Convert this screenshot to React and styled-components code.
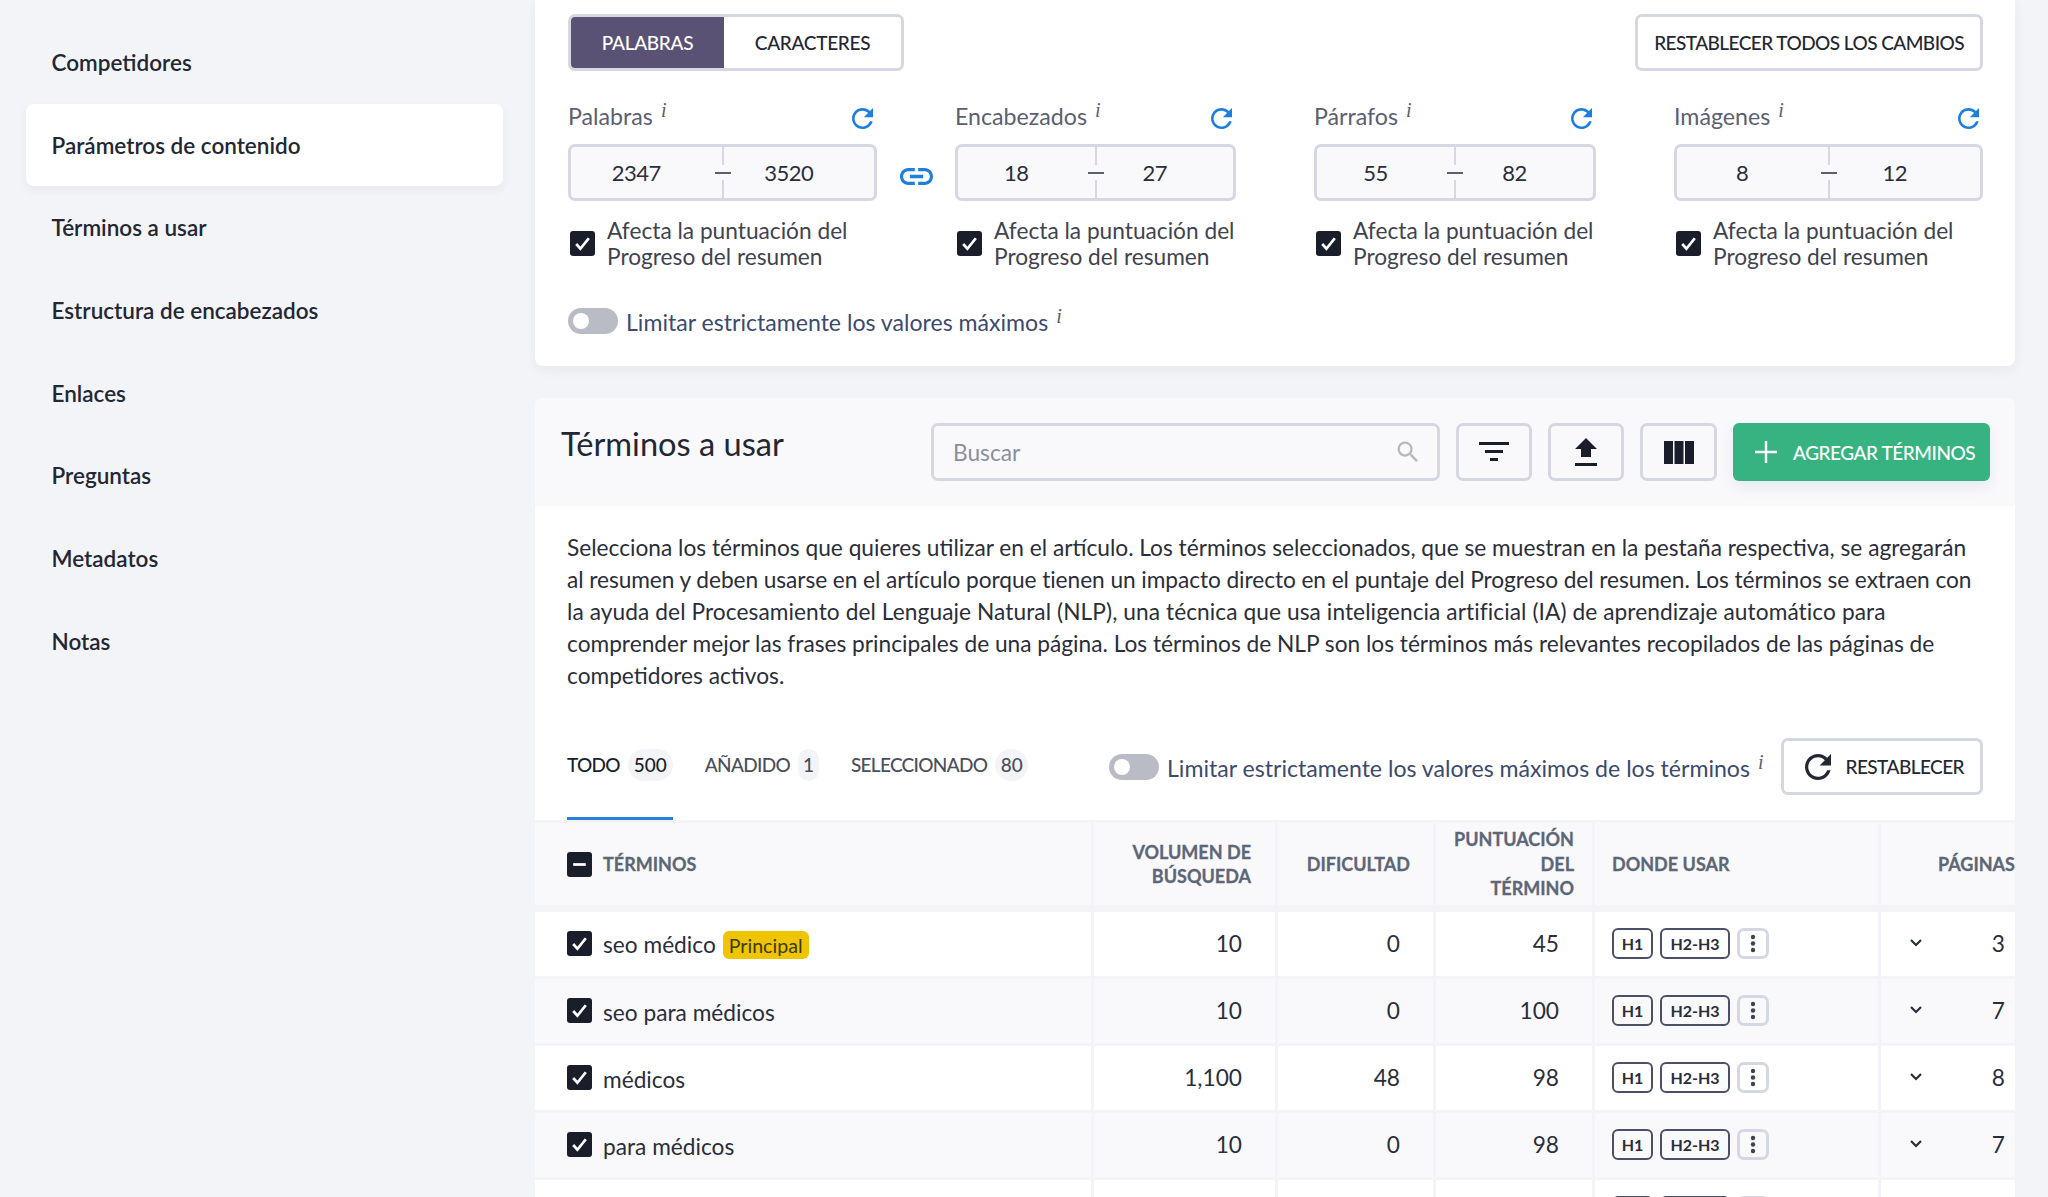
import React from 'react';
import styled, { createGlobalStyle } from 'styled-components';

const GlobalStyle = createGlobalStyle`
  html, body { margin: 0; padding: 0; height: 100%; background: #f3f4f8; overflow: hidden; }
  body { font-family: "Lato", "Noto Sans", sans-serif; font-size: 22.7px; color: #2a2e3a; }
  * { box-sizing: border-box; }
`;

const Page = styled.div`
  width: 2048px;
  height: 1197px;
  display: flex;
  overflow: hidden;
`;

const Sidebar = styled.nav`
  width: 535px;
  flex: none;
  padding: 21px 32px 0 26px;
`;

const NavItem = styled.div`
  height: 82.7px;
  display: flex;
  align-items: center;
  padding-left: 25.5px;
  font-size: 22.5px;
  font-weight: 600;
  color: #232733;
  border-radius: 8px;
  ${props => props.active && `
    background: #fff;
    box-shadow: 0 4px 10px rgba(40, 50, 90, 0.06);
  `}
`;

const Main = styled.main`
  width: 1480px;
  flex: none;
`;

const ParamsCard = styled.section`
  height: 366px;
  padding: 14px 32px 0 33px;
  background: #fff;
  border-radius: 0 0 8px 8px;
  box-shadow: 0 4px 12px rgba(40, 50, 90, 0.06);
`;

const TopRow = styled.div`
  display: flex;
  justify-content: space-between;
`;

const Segmented = styled.div`
  display: flex;
  height: 57px;
  border: 3px solid #d5d8e3;
  border-radius: 7px;
  overflow: hidden;
`;

const Segment = styled.div`
  width: ${props => props.w}px;
  display: flex;
  align-items: center;
  justify-content: center;
  font-size: 19px;
  font-weight: 500;
  letter-spacing: -0.3px;
  background: ${props => (props.active ? '#5a5275' : '#fff')};
  color: ${props => (props.active ? '#fff' : '#232733')};
`;

const OutlineButton = styled.button`
  height: 57px;
  padding: 0 16px 0 ${props => props.pad || 16}px;
  display: flex;
  align-items: center;
  gap: 14px;
  background: #fff;
  border: 3px solid #d5d8e3;
  border-radius: 7px;
  font: 500 19px "Lato", sans-serif;
  letter-spacing: -0.55px;
  color: #232733;
  white-space: nowrap;
`;

const MetricRow = styled.div`
  display: flex;
  margin-top: 26px;
`;

const Metric = styled.div`
  width: ${props => props.w}px;
  flex: none;
`;

const Between = styled.div`
  width: 78px;
  flex: none;
  display: flex;
  align-items: flex-start;
  justify-content: center;
  padding-top: 71px;
  color: #1f7fdc;
`;

const LabelRow = styled.div`
  height: 47px;
  padding: 0 4px 12px 0;
  display: flex;
  align-items: center;
  justify-content: space-between;
  color: #5a6070;
  font-size: 23.2px;
`;

const Info = styled.i`
  font-family: "Liberation Serif", serif;
  font-size: 20px;
  margin-left: 8px;
  vertical-align: 8px;
  color: #5a6070;
`;

const Range = styled.div`
  height: 57px;
  display: grid;
  grid-template-columns: 1fr 2px 1fr;
  background: #f9f9fc;
  border: 3px solid #d5d8e3;
  border-radius: 7px;
  font-size: 22px;
  letter-spacing: -0.5px;
  color: #2a2e3a;
`;

const RangeValue = styled.div`
  display: flex;
  align-items: center;
  justify-content: center;
  padding-right: 20px;
`;

const RangeDivider = styled.div`
  background: linear-gradient(#d5d8e3 0 36%, transparent 36% 64%, #d5d8e3 64%);
  display: flex;
  align-items: center;
  justify-content: center;
  &::after {
    content: '';
    flex: none;
    width: 16px;
    height: 2px;
    background: #5a6070;
  }
`;

const CheckRow = styled.div`
  display: flex;
  align-items: center;
  gap: 12px;
  margin-top: 17px;
  padding-left: 2px;
  font-size: 22.7px;
  line-height: 25.5px;
  color: #3f4350;
  white-space: nowrap;
`;

const Box = styled.span`
  width: 25px;
  height: 25px;
  flex: none;
  display: inline-flex;
  align-items: center;
  justify-content: center;
  background: #1a1e2b;
  border-radius: 3px;
  color: #fff;
`;

const ToggleRow = styled.div`
  display: flex;
  align-items: center;
  gap: 8px;
  margin-top: ${props => props.mt || 0}px;
  font-size: 23.1px;
  color: #3c4a6e;
  white-space: nowrap;
`;

const Toggle = styled.span`
  width: 50px;
  height: 26px;
  flex: none;
  padding: 5px;
  background: #b9bcc4;
  border-radius: 13px;
  &::before {
    content: '';
    display: block;
    width: 16px;
    height: 16px;
    border-radius: 50%;
    background: #fff;
  }
`;

const TermsSection = styled.section`
  margin-top: 32px;
  background: #fff;
  border-radius: 8px 8px 0 0;
`;

const TermsHeader = styled.header`
  height: 108px;
  padding: 25px 25px 0 26px;
  display: flex;
  gap: 16px;
  background: #f9f9fc;
  border-radius: 8px 8px 0 0;
`;

const Title = styled.h2`
  flex: 1;
  margin: 0;
  height: 42px;
  font-size: 32.6px;
  line-height: 42px;
  font-weight: 400;
  color: #232733;
`;

const Search = styled.div`
  width: 509px;
  height: 58px;
  padding: 0 15px 0 19px;
  display: flex;
  align-items: center;
  justify-content: space-between;
  border: 3px solid #d5d8e3;
  border-radius: 7px;
  color: #8a8f9c;
  font-size: 22.7px;
`;

const IconButton = styled.button`
  width: ${props => props.w || 76}px;
  height: 58px;
  padding: 0;
  display: flex;
  align-items: center;
  justify-content: center;
  background: transparent;
  border: 3px solid #d5d8e3;
  border-radius: 7px;
  color: #1a1e2b;
`;

const GreenButton = styled.button`
  width: 257px;
  height: 58px;
  padding: 0 0 0 21px;
  display: flex;
  align-items: center;
  gap: 15px;
  background: #37b381;
  border: 0;
  border-radius: 6px;
  box-shadow: 0 6px 14px rgba(40, 50, 90, 0.08);
  color: #fff;
  font: 500 19px "Lato", sans-serif;
  letter-spacing: -0.45px;
  white-space: nowrap;
`;

const Intro = styled.div`
  padding: 26px 0 0 32px;
  height: 212px;
  font-size: 22.7px;
  line-height: 32px;
  color: #2a2e3a;
  white-space: nowrap;
`;

const IntroLine = styled.p`
  margin: 0;
  letter-spacing: ${props => props.spacing || 0}px;
`;

const TabsRow = styled.div`
  height: 105px;
  padding: 0 32px;
  display: flex;
  border-bottom: 3px solid #f3f4f8;
`;

const Tabs = styled.div`
  display: flex;
  gap: 32px;
  height: 102px;
  width: 542px;
  flex: none;
`;

const Tab = styled.div`
  height: 102px;
  padding-top: 31px;
  display: flex;
  align-items: flex-start;
  gap: 8px;
  font-size: 19px;
  font-weight: 500;
  letter-spacing: -0.7px;
  line-height: 32px;
  color: ${props => (props.active ? '#1a1e2b' : '#4a4f5c')};
  border-bottom: 3px solid ${props => (props.active ? '#2a7fd9' : 'transparent')};
`;

const Count = styled.span`
  width: ${props => props.w}px;
  height: 32px;
  text-align: center;
  letter-spacing: 0;
  background: #f3f4f8;
  border-radius: 16px;
`;

const TabsRight = styled.div`
  flex: 1;
  height: 77px;
  padding-top: 20px;
  display: flex;
  justify-content: space-between;
  align-items: center;
`;

const Table = styled.div`
  display: grid;
  grid-template-columns: 556px 181px 155px 156px 283px 134px;
  column-gap: 3px;
  background: #f3f4f8;
`;

const HeadCell = styled.div`
  height: 82px;
  margin-bottom: 7px;
  padding: 0 ${props => props.pr ?? 24}px 0 ${props => props.pl || 0}px;
  display: flex;
  align-items: center;
  gap: 11px;
  justify-content: ${props => (props.left ? 'flex-start' : 'flex-end')};
  text-align: ${props => (props.left ? 'left' : 'right')};
  background: #f9f9fc;
  font-size: 18px;
  font-weight: 700;
  -webkit-text-stroke: 0.3px #5d6676;
  line-height: 24.5px;
  color: #5d6676;
  white-space: nowrap;
`;

const Cell = styled.div`
  height: 64px;
  margin-bottom: 3px;
  padding: 0 ${props => props.pr ?? 33}px 2px ${props => props.pl || 0}px;
  display: flex;
  align-items: center;
  justify-content: ${props => (props.left ? 'flex-start' : 'flex-end')};
  gap: ${props => props.gap || 0}px;
  background: ${props => (props.odd ? '#f9f9fc' : '#fff')};
  font-size: 22.7px;
  color: #2a2e3a;
  white-space: nowrap;
`;

const Term = styled.span`
  padding-top: 4px;
`;

const Badge = styled.span`
  margin-left: 7px;
  height: 28px;
  padding: 0 6px;
  display: inline-flex;
  align-items: center;
  background: #efc400;
  border-radius: 6px;
  font-size: 19.6px;
  color: #3d3a20;
`;

const Chip = styled.span`
  width: ${props => props.w}px;
  height: 31px;
  display: inline-flex;
  align-items: center;
  justify-content: center;
  border: 2px solid #4a5066;
  border-radius: 6px;
  font-size: 16px;
  font-weight: 700;
  color: #2a2e3a;
`;

const More = styled.span`
  width: 32px;
  height: 31px;
  display: inline-flex;
  align-items: center;
  justify-content: center;
  border: 3px solid #d5d8e3;
  border-radius: 7px;
  color: #3f4350;
`;

const Chevron = styled.svg`
  margin-right: auto;
`;

const RefreshBlue = styled.span`
  display: inline-flex;
  margin-top: 8px;
  color: #1f7fdc;
`;

const RefreshIcon = ({ size = 21 }) => (
  <svg width={size} height={size} viewBox="4 4 16 16" fill="currentColor">
    <path d="M17.65 6.35C16.2 4.9 14.21 4 12 4c-4.42 0-7.99 3.58-7.99 8s3.57 8 7.99 8c3.73 0 6.84-2.55 7.73-6h-2.08c-.82 2.33-3.04 4-5.65 4-3.31 0-6-2.69-6-6s2.69-6 6-6c1.66 0 3.14.69 4.22 1.78L13 11h7V4l-2.35 2.35z" />
  </svg>
);

const CheckMark = ({ minus }) => (
  <svg width="21" height="21" viewBox="0 0 20 20" fill="none" stroke="currentColor" strokeWidth="2.6">
    {minus ? <path d="M4 10h12" /> : <path d="M4 10.5l4 4.5 8-10" />}
  </svg>
);

const metrics = [
  { label: 'Palabras', w: 309, min: '2347', max: '3520', link: true },
  { label: 'Encabezados', w: 281, min: '18', max: '27' },
  { label: 'Párrafos', w: 282, min: '55', max: '82' },
  { label: 'Imágenes', w: 309, min: '8', max: '12' },
];

const rows = [
  { term: 'seo médico', main: true, vol: '10', diff: '0', score: '45', pages: '3' },
  { term: 'seo para médicos', vol: '10', diff: '0', score: '100', pages: '7' },
  { term: 'médicos', vol: '1,100', diff: '48', score: '98', pages: '8' },
  { term: 'para médicos', vol: '10', diff: '0', score: '98', pages: '7' },
  { term: '', vol: '', diff: '', score: '', pages: '' }, // cut off by the window, only the chips' top edge shows
];

const nav = ['Competidores', 'Parámetros de contenido', 'Términos a usar', 'Estructura de encabezados', 'Enlaces', 'Preguntas', 'Metadatos', 'Notas'];

export default function App() {
  return (
    <Page>
      <GlobalStyle />
      <Sidebar>
        {nav.map((item, i) => <NavItem key={item} active={i === 1}>{item}</NavItem>)}
      </Sidebar>
      <Main>
        <ParamsCard>
          <TopRow>
            <Segmented>
              <Segment w={153} active>PALABRAS</Segment>
              <Segment w={177}>CARACTERES</Segment>
            </Segmented>
            <OutlineButton>RESTABLECER TODOS LOS CAMBIOS</OutlineButton>
          </TopRow>
          <MetricRow>
            {metrics.map((m, i) => (
              <React.Fragment key={m.label}>
                <Metric w={m.w}>
                  <LabelRow>
                    <span>{m.label}<Info>i</Info></span>
                    <RefreshBlue><RefreshIcon /></RefreshBlue>
                  </LabelRow>
                  <Range>
                    <RangeValue>{m.min}</RangeValue>
                    <RangeDivider />
                    <RangeValue>{m.max}</RangeValue>
                  </Range>
                  <CheckRow>
                    <Box><CheckMark /></Box>
                    <span>Afecta la puntuación del<br />Progreso del resumen</span>
                  </CheckRow>
                </Metric>
                {i < 3 && (
                  <Between>
                    {m.link && (
                      <svg width="33" height="17" viewBox="2 7 20 10" preserveAspectRatio="none" fill="currentColor">
                        <path d="M3.9 12c0-1.71 1.39-3.1 3.1-3.1h4V7H7c-2.76 0-5 2.24-5 5s2.24 5 5 5h4v-1.9H7c-1.71 0-3.1-1.39-3.1-3.1zM8 13h8v-2H8v2zm9-6h-4v1.9h4c1.71 0 3.1 1.39 3.1 3.1s-1.39 3.1-3.1 3.1h-4V17h4c2.76 0 5-2.24 5-5s-2.24-5-5-5z" />
                      </svg>
                    )}
                  </Between>
                )}
              </React.Fragment>
            ))}
          </MetricRow>
          <ToggleRow mt={36}>
            <Toggle />
            <span>Limitar estrictamente los valores máximos<Info>i</Info></span>
          </ToggleRow>
        </ParamsCard>

        <TermsSection>
          <TermsHeader>
            <Title>Términos a usar</Title>
            <Search>
              <span>Buscar</span>
              <svg width="28" height="28" viewBox="0 0 24 24" fill="#b5b8c2">
                <path d="M15.5 14h-.79l-.28-.27A6.47 6.47 0 0 0 16 9.5 6.5 6.5 0 1 0 9.5 16c1.61 0 3.09-.59 4.23-1.57l.27.28v.79l5 4.99L20.49 19l-4.99-5zm-6 0C7.01 14 5 11.99 5 9.5S7.01 5 9.5 5 14 7.01 14 9.5 11.99 14 9.5 14z" />
              </svg>
            </Search>
            <IconButton>
              <svg width="30" height="20" viewBox="0 0 30 20" fill="currentColor">
                <path d="M0 0h30v3H0zM6 8h18v3H6zM11 16h8v3h-8z" />
              </svg>
            </IconButton>
            <IconButton>
              <svg width="24" height="29" viewBox="0 0 24 29" fill="currentColor">
                <path d="M7 19h10v-8h6L12 0 1 11h6zM1 25h22v3H1z" />
              </svg>
            </IconButton>
            <IconButton w={77}>
              <svg width="30" height="23" viewBox="0 0 30 23" fill="currentColor">
                <path d="M0 0h9v23H0zM10.5 0h9v23h-9zM21 0h9v23h-9z" />
              </svg>
            </IconButton>
            <GreenButton>
              <svg width="24" height="24" viewBox="0 0 24 24" fill="none" stroke="currentColor" strokeWidth="2.4">
                <path d="M12 1v22M1 12h22" />
              </svg>
              AGREGAR TÉRMINOS
            </GreenButton>
          </TermsHeader>

          <Intro>
            <IntroLine>Selecciona los términos que quieres utilizar en el artículo. Los términos seleccionados, que se muestran en la pestaña respectiva, se agregarán</IntroLine>
            <IntroLine spacing={-0.065}>al resumen y deben usarse en el artículo porque tienen un impacto directo en el puntaje del Progreso del resumen. Los términos se extraen con</IntroLine>
            <IntroLine spacing={0.08}>la ayuda del Procesamiento del Lenguaje Natural (NLP), una técnica que usa inteligencia artificial (IA) de aprendizaje automático para</IntroLine>
            <IntroLine>comprender mejor las frases principales de una página. Los términos de NLP son los términos más relevantes recopilados de las páginas de</IntroLine>
            <IntroLine>competidores activos.</IntroLine>
          </Intro>

          <TabsRow>
            <Tabs>
              <Tab active>TODO<Count w={45}>500</Count></Tab>
              <Tab>AÑADIDO<Count w={21}>1</Count></Tab>
              <Tab>SELECCIONADO<Count w={33}>80</Count></Tab>
            </Tabs>
            <TabsRight>
              <ToggleRow>
                <Toggle />
                <span>Limitar estrictamente los valores máximos de los términos<Info>i</Info></span>
              </ToggleRow>
              <OutlineButton pad={21}><RefreshIcon size={26} />RESTABLECER</OutlineButton>
            </TabsRight>
          </TabsRow>

          <Table>
            <HeadCell left pl={32}><Box><CheckMark minus /></Box>TÉRMINOS</HeadCell>
            <HeadCell>VOLUMEN DE<br />BÚSQUEDA</HeadCell>
            <HeadCell pr={23}>DIFICULTAD</HeadCell>
            <HeadCell pr={18}>PUNTUACIÓN<br />DEL<br />TÉRMINO</HeadCell>
            <HeadCell left pl={17}>DONDE USAR</HeadCell>
            <HeadCell pr={0}>PÁGINAS</HeadCell>
            {rows.map((r, i) => (
              <React.Fragment key={i}>
                <Cell left pl={32} gap={11} odd={i % 2 === 1}>
                  <Box><CheckMark /></Box>
                  <Term>{r.term}{r.main && <Badge>Principal</Badge>}</Term>
                </Cell>
                <Cell odd={i % 2 === 1}>{r.vol}</Cell>
                <Cell odd={i % 2 === 1}>{r.diff}</Cell>
                <Cell odd={i % 2 === 1}>{r.score}</Cell>
                <Cell left pl={17} gap={7} odd={i % 2 === 1}>
                  <Chip w={41}>{r.term && 'H1'}</Chip>
                  <Chip w={70}>{r.term && 'H2-H3'}</Chip>
                  <More>
                    <svg width="6" height="19" viewBox="0 0 6 19" fill="currentColor">
                      <circle cx="3" cy="3" r="2.2" /><circle cx="3" cy="9.5" r="2.2" /><circle cx="3" cy="16" r="2.2" />
                    </svg>
                  </More>
                </Cell>
                <Cell pl={28} pr={10} odd={i % 2 === 1}>
                  <Chevron width="14" height="10" viewBox="0 0 14 10" fill="none" stroke="#2a2e3a" strokeWidth="2.2">
                    <path d="M2 2l5 5 5-5" />
                  </Chevron>
                  {r.pages}
                </Cell>
              </React.Fragment>
            ))}
          </Table>
        </TermsSection>
      </Main>
    </Page>
  );
}
